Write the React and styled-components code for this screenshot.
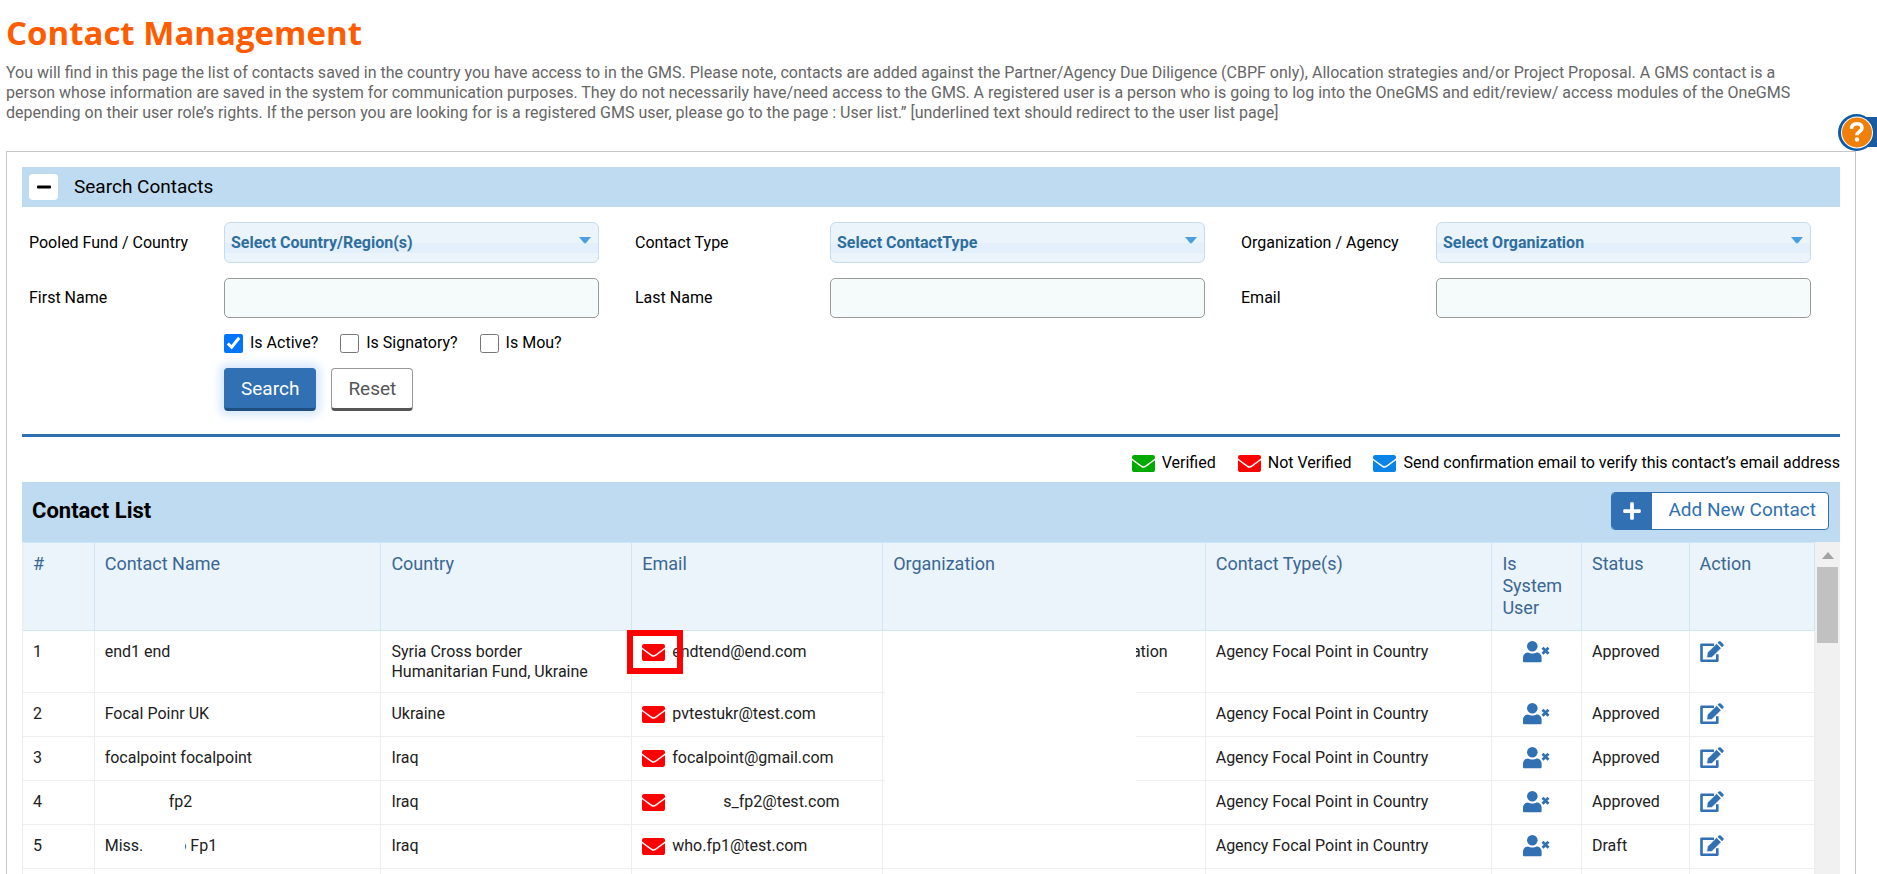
import React from "react";
import styled, { createGlobalStyle, css } from "styled-components";
import { FaMinus, FaPlus } from "react-icons/fa";

const Global = createGlobalStyle`
  * { box-sizing: border-box; }
  body {
    margin: 0;
    background: #fff;
    color: #000;
    font: 16px/20px Roboto, "Liberation Sans", sans-serif;
  }
  button, input, select { font-family: inherit; }
`;

const Page = styled.main`
  display: flex;
  flex-direction: column;
  height: 100vh;
  overflow: hidden;
  padding: 10px 21px 0 6px;
`;

const Title = styled.h1`
  margin: 0;
  font: 700 33px/46px "Open Sans", sans-serif;
  color: #ff5c00;
`;

const Intro = styled.p`
  margin: 7px 0 28px;
  padding-right: 42px;
  color: #666;
`;

const Panel = styled.section`
  flex: 1;
  display: flex;
  flex-direction: column;
  border: 1px solid #c8c8c8;
  border-bottom: 0;
  padding: 15px 15px 0;
  min-height: 0;
`;

const SearchBar = styled.header`
  display: flex;
  align-items: center;
  gap: 16px;
  height: 40px;
  padding: 0 7px;
  background: #bfdbf1;
`;

const SearchTitle = styled.h2`
  margin: 0;
  font-size: 19px;
  line-height: 22px;
  font-weight: 400;
`;

const ToggleButton = styled.button`
  display: flex;
  align-items: center;
  justify-content: center;
  width: 29px;
  height: 26px;
  padding: 0;
  border: 0;
  border-radius: 4px;
  background: #fff;
  color: #000;
`;

const SearchForm = styled.form`
  padding: 15px 0 23px;
  border-bottom: 3px solid #3070b3;
`;

const Fields = styled.div`
  display: grid;
  grid-template-columns: repeat(3, 1fr);
  row-gap: 15px;
`;

const Field = styled.div`
  display: grid;
  grid-template-columns: 195px 1fr;
  align-items: center;
  padding: 0 29px 0 7px;
`;

const fieldBox = css`
  width: 100%;
  border-radius: 5px;
  font-size: 16px;
`;

const TextInput = styled.input`
  ${fieldBox}
  height: 40px;
  border: 1px solid #999;
  background: #f5fafa;
  padding: 0 8px;
`;

const SelectWrap = styled.div`
  position: relative;
`;

const Select = styled.select`
  ${fieldBox}
  display: block;
  height: 41px;
  appearance: none;
  border: 1px solid #c5dcee;
  border-radius: 6px;
  padding: 0 6px;
  color: #2e6e9e;
  font-weight: 700;
  background: linear-gradient(#ebf3fb 0 50%, #e3effb 50% 76%, #ebf3fb 76%);
`;

const SelectArrow = styled.svg`
  position: absolute;
  right: 8px;
  top: 15px;
  pointer-events: none;
`;

const Checks = styled.div`
  display: flex;
  gap: 22px;
  padding: 15px 0 0 202px;
`;

const Check = styled.label`
  display: flex;
  align-items: center;
  gap: 7px;

  input {
    width: 19px;
    height: 19px;
    margin: 0;
    accent-color: #0075ff;
  }
`;

const Actions = styled.div`
  display: flex;
  gap: 15px;
  padding: 15px 0 0 202px;
`;

const ActionButton = styled.button`
  height: 43px;
  padding: 0 16px;
  font-size: 19px;
  border-radius: 4px;
  ${(p) =>
    p.$primary
      ? css`
          color: #fff;
          background: #3070b3;
          border: 1px solid #3070b3;
          border-bottom: 3px solid #1f4e80;
          box-shadow: 0 0 8px 5px #d9e8fc;
        `
      : css`
          color: #555;
          background: #fff;
          border: 1px solid #999;
          border-bottom: 3px solid #555;
        `}
`;

const Legend = styled.ul`
  display: flex;
  justify-content: flex-end;
  gap: 22px;
  margin: 0;
  padding: 16px 0 9px;
  list-style: none;

  li {
    display: flex;
    align-items: center;
    gap: 7px;
  }
`;

const ListBar = styled.header`
  display: flex;
  align-items: flex-start;
  justify-content: space-between;
  height: 60px;
  padding: 10px 11px 0 10px;
  background: #bfdbf1;
`;

const ListTitle = styled.h2`
  margin: 0;
  font-size: 22px;
  line-height: 38px;
  font-weight: 700;
`;

const AddButton = styled.button`
  display: flex;
  align-items: stretch;
  height: 38px;
  padding: 0;
  border: 1px solid #3070b3;
  border-radius: 4px;
  overflow: hidden;
  background: #fff;
  color: #3070b3;
  font-size: 19px;
`;

const AddIcon = styled.span`
  display: flex;
  align-items: center;
  justify-content: center;
  width: 40px;
  background: #3070b3;
  color: #fff;
`;

const AddText = styled.span`
  padding: 0 12px 0 16px;
  line-height: 34px;
`;

const TableArea = styled.div`
  flex: 1;
  display: flex;
  align-items: stretch;
  min-height: 0;
  overflow: hidden;
`;

const Table = styled.table`
  flex: 1;
  table-layout: fixed;
  border-collapse: separate;
  border-spacing: 0;
  border-left: 1px solid #eee;
  align-self: flex-start;

  th, td {
    text-align: left;
    vertical-align: top;
    font-weight: 400;
    padding: 11px 10px 10px;
  }
  th {
    padding: 10px 10px 11px;
    font-size: 18px;
    line-height: 22px;
    color: #3a6793;
    background: #ebf3fb;
    border: solid #d0e6f5;
    border-width: 1px 1px 1px 0;
  }
  td {
    height: 44px;
    color: #212121;
    border: solid #eee;
    border-width: 0 1px 1px 0;
  }
`;

const IconCell = styled.td`
  && { padding-top: 10px; }
`;

const MailCell = styled.div`
  display: flex;
  align-items: center;
  gap: 7px;
  position: relative;
`;

const Marker = styled.span`
  position: absolute;
  left: -15px;
  top: -12px;
  width: 56px;
  height: 44px;
  border: 6px solid #f00;
`;

const Blank = styled.span`
  display: inline-block;
  width: ${(p) => p.$width}px;
`;

const Masked = styled.span`
  position: relative;

  &::after {
    content: "";
    position: absolute;
    inset: 0 1px 0 0;
    background: #fff;
  }
`;

const OrgCell = styled.td`
  position: relative;
`;

const OrgText = styled.div`
  text-align: right;
  padding-right: 27px;
`;

const Redaction = styled.span`
  position: absolute;
  left: 2px;
  top: 0;
  width: 78%;
  height: calc(100% + 1px);
  background: #fff;
`;

const IconButton = styled.button`
  display: block;
  border: 0;
  padding: 0;
  background: none;
  height: 22px;
`;

const Person = styled.svg`
  display: block;
  margin: 0 auto;
`;

const Scrollbar = styled.div`
  width: 25px;
  padding: 10px 2px 0;
  background: #f1f1f1;
`;

const ScrollUp = styled.svg`
  display: block;
  margin: 0 auto 8px;
`;

const ScrollThumb = styled.div`
  height: 76px;
  background: #c1c1c1;
`;

const HelpTab = styled.button`
  position: absolute;
  right: 0;
  top: 113px;
  padding: 0;
  border: 0;
  background: none;
  line-height: 0;
`;

const Mail = ({ color = "#f00" }) => (
  <svg width="23" height="17" viewBox="0 64 512 384" preserveAspectRatio="none" fill={color} aria-hidden="true">
    <path d="M502.300 190.800c3.900-3.100 9.700-.2 9.700 4.700V400c0 26.500-21.500 48-48 48H48c-26.500 0-48-21.500-48-48V195.600c0-5 5.700-7.800 9.700-4.700 22.400 17.400 52.100 39.500 154.100 113.600 21.100 15.400 56.700 47.800 92.200 47.600 35.700.3 72-32.800 92.300-47.600 102-74.100 131.600-96.300 154-113.700zM256 320c23.200.4 56.600-29.200 73.400-41.400 132.700-96.300 142.800-104.700 173.400-128.700 5.800-4.500 9.200-11.500 9.200-18.900v-19c0-26.500-21.500-48-48-48H48c-26.500 0-48 21.500-48 48v19c0 7.400 3.400 14.300 9.200 18.900 30.600 23.900 40.700 32.400 173.400 128.700 16.800 12.200 50.200 41.800 73.400 41.400z" />
  </svg>
);

const NonUser = () => (
  <Person width="27" height="22" viewBox="0 0 27 22" fill="#3070b3" role="img" aria-label="Not a system user">
    <circle cx="9.300" cy="5.300" r="5.300" />
    <path d="M0 20v-3.200C0 13.500 2.200 11.500 5 11.500c1.500.8 2.800 1 4.300 1s2.800-.2 4.300-1c2.800 0 5 2 5 5.300V20c0 .8-.5 1.300-1.300 1.300h-16C.5 21.300 0 20.800 0 20z" />
    <path d="M19.500 6.800l6 6M25.500 6.800l-6 6" stroke="#3070b3" strokeWidth="2.800" />
  </Person>
);

const Edit = () => (
  <svg width="24" height="22" viewBox="0 0 24 22" aria-hidden="true">
    <path d="M14 3.800H1.500v16H17.300v-6.500" fill="none" stroke="#3070b3" strokeWidth="2.600" strokeLinejoin="round" />
    <path d="M6.800 16.800l.6-5L16.600 2.600l4.600 4.600-9.300 9.200z" fill="#3070b3" stroke="#fff" strokeWidth=".6" />
    <path d="M17.600 1.700l1.100-1.100q1-.9 2 0l2.500 2.500q1 1 0 2l-1.100 1.100z" fill="#3070b3" />
  </svg>
);

const fields = [
  ["Pooled Fund / Country", "Select Country/Region(s)"],
  ["Contact Type", "Select ContactType"],
  ["Organization / Agency", "Select Organization"],
  ["First Name"],
  ["Last Name"],
  ["Email"],
];

const checks = [
  ["Is Active?", true],
  ["Is Signatory?", false],
  ["Is Mou?", false],
];

const columns = [
  ["#", 4],
  ["Contact Name", 16],
  ["Country", 14],
  ["Email", 14],
  ["Organization", 18],
  ["Contact Type(s)", 16],
  ["Is System User", 5],
  ["Status", 6],
  ["Action", 7],
];

const rows = [
  { name: "end1 end", country: "Syria Cross border Humanitarian Fund, Ukraine", mail: "endtend@end.com", org: "ation", hide: true, marked: true, status: "Approved" },
  { name: "Focal Poinr UK", country: "Ukraine", mail: "pvtestukr@test.com", hide: true, status: "Approved" },
  { name: "focalpoint focalpoint", country: "Iraq", mail: "focalpoint@gmail.com", hide: true, status: "Approved" },
  { name: <><Blank $width={64} />fp2</>, country: "Iraq", mail: <><Blank $width={51} />s_fp2@test.com</>, status: "Approved" },
  { name: <>Miss.<Blank $width={34} /><Masked>o</Masked> Fp1</>, country: "Iraq", mail: "who.fp1@test.com", status: "Draft" },
];

export default function App() {
  return (
    <>
      <Global />
      <Page>
        <Title>Contact Management</Title>
        <Intro>
          You will find in this page the list of contacts saved in the country you have access to in the GMS. Please note,
          contacts are added against the Partner/Agency Due Diligence (CBPF only), Allocation strategies and/or Project
          Proposal. A GMS contact is a person whose information are saved in the system for communication purposes. They
          do not necessarily have/need access to the GMS. A registered user is a person who is going to log into the
          OneGMS and edit/review/ access modules of the OneGMS depending on their user role’s rights. If the person you
          are looking for is a registered GMS user, please go to the page : User list.” [underlined text should redirect
          to the user list page]
        </Intro>
        <Panel>
          <SearchBar>
            <ToggleButton type="button" aria-label="Collapse search">
              <FaMinus size={16} />
            </ToggleButton>
            <SearchTitle>Search Contacts</SearchTitle>
          </SearchBar>
          <SearchForm onSubmit={(e) => e.preventDefault()}>
            <Fields>
              {fields.map(([label, option], i) => (
                <Field key={label}>
                  <label htmlFor={`field-${i}`}>{label}</label>
                  {option ? (
                    <SelectWrap>
                      <Select id={`field-${i}`}>
                        <option>{option}</option>
                      </Select>
                      <SelectArrow width="12" height="7" viewBox="0 0 12 7" aria-hidden="true">
                        <path d="M0 0h12L7 6q-1 .8-2 0z" fill="#4a9fe0" />
                      </SelectArrow>
                    </SelectWrap>
                  ) : (
                    <TextInput id={`field-${i}`} type="text" />
                  )}
                </Field>
              ))}
            </Fields>
            <Checks>
              {checks.map(([label, on]) => (
                <Check key={label}>
                  <input type="checkbox" defaultChecked={on} />
                  {label}
                </Check>
              ))}
            </Checks>
            <Actions>
              <ActionButton $primary type="submit">Search</ActionButton>
              <ActionButton type="reset">Reset</ActionButton>
            </Actions>
          </SearchForm>
          <Legend>
            <li><Mail color="#0a0" />Verified</li>
            <li><Mail />Not Verified</li>
            <li><Mail color="#0a84e8" />Send confirmation email to verify this contact’s email address</li>
          </Legend>
          <ListBar>
            <ListTitle>Contact List</ListTitle>
            <AddButton type="button">
              <AddIcon><FaPlus size={20} /></AddIcon>
              <AddText>Add New Contact</AddText>
            </AddButton>
          </ListBar>
          <TableArea>
            <Table>
              <colgroup>
                {columns.map(([label, width]) => (
                  <col key={label} style={{ width: `${width}%` }} />
                ))}
              </colgroup>
              <thead>
                <tr>
                  {columns.map(([label]) => (
                    <th key={label} scope="col">{label}</th>
                  ))}
                </tr>
              </thead>
              <tbody>
                {rows.map((row, i) => (
                  <tr key={i}>
                    <td>{i + 1}</td>
                    <td>{row.name}</td>
                    <td>{row.country}</td>
                    <td>
                      <MailCell>
                        <Mail />
                        <span>{row.mail}</span>
                        {row.marked && <Marker />}
                      </MailCell>
                    </td>
                    <OrgCell>
                      {row.org && <OrgText>{row.org}</OrgText>}
                      {row.hide && <Redaction />}
                    </OrgCell>
                    <td>Agency Focal Point in Country</td>
                    <IconCell><NonUser /></IconCell>
                    <td>{row.status}</td>
                    <IconCell>
                      <IconButton type="button" aria-label="Edit contact"><Edit /></IconButton>
                    </IconCell>
                  </tr>
                ))}
                <tr>
                  {columns.map(([label]) => (
                    <td key={label} />
                  ))}
                </tr>
              </tbody>
            </Table>
            <Scrollbar>
              <ScrollUp width="12" height="7" viewBox="0 0 12 7" aria-hidden="true">
                <path d="M0 7l6-7 6 7z" fill="#a3a3a3" />
              </ScrollUp>
              <ScrollThumb />
            </Scrollbar>
          </TableArea>
        </Panel>
        <HelpTab type="button" aria-label="Help">
          <svg width="39" height="39" viewBox="0 0 39 39" aria-hidden="true">
            <path d="M19 4h20v30H19z" fill="#1a5a9e" />
            <circle cx="18.500" cy="19.500" r="18.500" fill="#0b5ba8" />
            <circle cx="19" cy="19.500" r="16" fill="#fff" />
            <circle cx="19" cy="19.500" r="15" fill="#f0800a" />
            <path d="M13.500 15.800q.3-5 5.300-5t5.200 4.200c0 3.300-5 3.800-5 7.200" fill="none" stroke="#fff" strokeWidth="3.600" />
            <circle cx="19" cy="26.500" r="2.200" fill="#fff" />
          </svg>
        </HelpTab>
      </Page>
    </>
  );
}
